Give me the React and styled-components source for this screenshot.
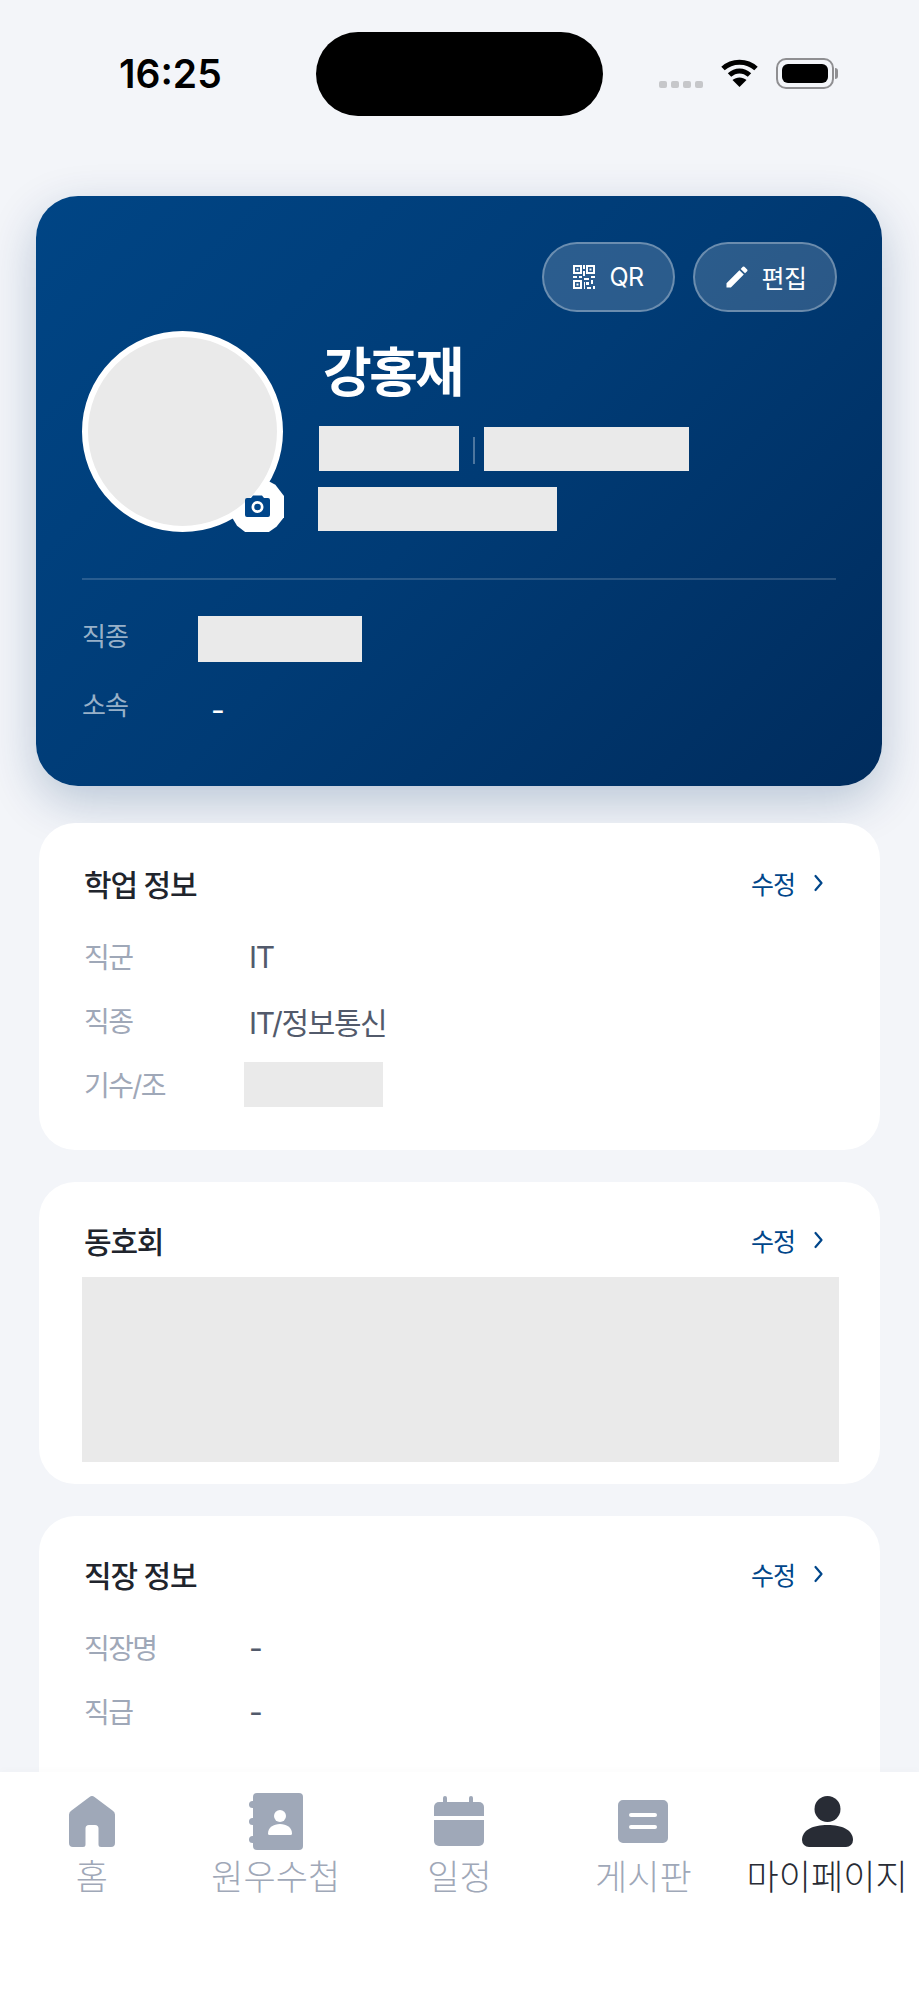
import React from 'react';
import styled, { createGlobalStyle } from 'styled-components';

const GlobalStyle = createGlobalStyle`
  html, body {
    margin: 0;
    padding: 0;
    background: #f3f5f9;
  }
  body {
    font-family: 'Inter', 'Noto Sans CJK KR', sans-serif;
    overflow: hidden;
  }
  * {
    box-sizing: border-box;
  }
`;

const Page = styled.div`
  position: relative;
  width: 919px;
  height: 1998px;
  overflow: hidden;
  background: #f3f5f9;
`;

const StatusBar = styled.div`
  height: 196px;
  display: flex;
  align-items: flex-start;
  padding: 32px 81px 0 119px;
`;

const Clock = styled.div`
  width: 197px;
  padding-top: 19px;
  font-size: 39px;
  line-height: 46px;
  font-weight: 600;
  letter-spacing: 0;
  color: #000;
`;

const Island = styled.div`
  width: 287px;
  height: 84px;
  border-radius: 42px;
  background: #000;
`;

const StatusIcons = styled.div`
  display: flex;
  align-items: flex-start;
  margin-left: 56px;
  padding-top: 27px;
`;

const SignalDots = styled.div`
  display: flex;
  gap: 4px;
  margin-top: 22px;
  margin-right: 17px;
`;

const SignalDot = styled.span`
  width: 8px;
  height: 7px;
  border-radius: 2px;
  background: #c6c7ca;
`;

const Battery = styled.div`
  position: relative;
  width: 58px;
  height: 31px;
  margin-left: 17px;
  margin-top: -1px;
  padding: 4px;
  border: 2px solid #8f8f92;
  border-radius: 10px;

  &::before {
    content: '';
    display: block;
    height: 100%;
    border-radius: 6px;
    background: #000;
  }
  &::after {
    content: '';
    position: absolute;
    top: 8px;
    right: -6px;
    width: 3px;
    height: 11px;
    border-radius: 0 3px 3px 0;
    background: #8f8f92;
  }
`;

const Hero = styled.section`
  margin: 0 37px 0 36px;
  height: 590px;
  padding: 46px 46px 0;
  border-radius: 42px;
  background: linear-gradient(135deg, #004585 0%, #003b75 50%, #002c5d 100%);
  box-shadow: 0 16px 48px rgba(0, 52, 104, 0.24);
`;

const HeroActions = styled.div`
  display: flex;
  justify-content: flex-end;
  gap: 18px;
  height: 70px;
  margin-right: -1px;
`;

const PillButton = styled.button`
  display: flex;
  align-items: center;
  justify-content: center;
  gap: ${(p) => p.$gap}px;
  width: ${(p) => p.$width}px;
  height: 70px;
  padding: 0;
  border: 2px solid rgba(255, 255, 255, 0.3);
  border-radius: 35px;
  background: rgba(255, 255, 255, 0.17);
  color: #fff;
  font-family: inherit;
  font-size: 25px;
  font-weight: 400;
  letter-spacing: -0.5px;
`;

const Profile = styled.div`
  display: flex;
  margin-top: 19px;
`;

const AvatarWrap = styled.div`
  position: relative;
  flex: none;
  width: 202px;
  height: 201px;
`;

const Avatar = styled.div`
  position: relative;
  z-index: 1;
  width: 201px;
  height: 201px;
  border: 6px solid #fff;
  border-radius: 50%;
  background: #eaeaea;
`;

const CameraBadge = styled.div`
  position: absolute;
  z-index: 2;
  top: 148px;
  left: 148px;
  width: 54px;
  height: 53px;
  display: flex;
  align-items: center;
  justify-content: center;
  padding-bottom: 1px;
  color: #00468a;
`;

const BadgeBack = styled.div`
  position: absolute;
  top: 148px;
  left: 148px;
  width: 54px;
  height: 53px;
  background: #fff;
  clip-path: polygon(36% 0, 64% 0, 84% 11%, 100% 32%, 100% 72%, 86% 90%, 72% 100%, 28% 100%, 13% 88%, 0 66%, 0 36%, 14% 12%);
`;

const ProfileInfo = styled.div`
  margin-left: 34px;
  padding-top: 7px;
`;

const Name = styled.h1`
  margin: 0 0 18px 5px;
  font-size: 53px;
  line-height: 70px;
  font-weight: 700;
  letter-spacing: -2.5px;
  color: #fff;
`;

const InfoLine = styled.div`
  display: flex;
  align-items: center;
`;

const Redacted = styled.div`
  flex: none;
  width: ${(p) => p.$w}px;
  height: ${(p) => p.$h}px;
  margin-left: ${(p) => p.$ml || 0}px;
  margin-top: ${(p) => p.$mt || 0}px;
  background: #eaeaea;
`;

const VDivider = styled.span`
  width: 2px;
  height: 27px;
  margin: 4px 9px 0 14px;
  background: rgba(255, 255, 255, 0.3);
`;

const InfoGap = styled.div`
  height: 16px;
`;

const HeroDivider = styled.div`
  height: 2px;
  margin-top: 46px;
  background: rgba(255, 255, 255, 0.16);
`;

const HeroRow = styled.div`
  display: flex;
  align-items: center;
  height: 46px;
  margin-top: ${(p) => p.$mt}px;
`;

const HeroLabel = styled.div`
  width: ${(p) => p.$w}px;
  padding-bottom: 9px;
  font-size: 26px;
  letter-spacing: -0.8px;
  color: rgba(255, 255, 255, 0.62);
`;

const HeroValue = styled.div`
  font-size: 30px;
  padding-top: 3px;
  color: #fff;
`;

const InfoCard = styled.section`
  height: ${(p) => p.$h}px;
  margin: ${(p) => p.$mt}px 39px 0 39px;
  padding: 0 44px 0 45px;
  border-radius: 36px;
  background: #fff;
  overflow: hidden;
`;

const CardHeader = styled.div`
  display: flex;
  align-items: center;
  justify-content: space-between;
  height: 40px;
  margin-top: ${(p) => p.$mt}px;
`;

const CardTitle = styled.h2`
  margin: 0;
  font-size: 30px;
  font-weight: 500;
  letter-spacing: -1.2px;
  color: #20242c;
`;

const EditLink = styled.a`
  display: flex;
  align-items: center;
  gap: 18px;
  margin-right: 12px;
  font-size: 25px;
  letter-spacing: -1px;
  color: #00468a;
`;

const CardRows = styled.div`
  margin-top: 30px;
`;

const CardRow = styled.div`
  display: flex;
  align-items: center;
  height: 45px;
  margin-bottom: 19px;
`;

const RowLabel = styled.div`
  width: 165px;
  font-size: 28px;
  letter-spacing: -1.6px;
  color: #9fa8b8;
`;

const RowValue = styled.div`
  padding-top: 3px;
  font-size: 30px;
  letter-spacing: -1.4px;
  color: #525a6b;
`;

const ClubBlock = styled.div`
  width: 757px;
  height: 185px;
  margin: 17px 0 0 -2px;
  background: #eaeaea;
`;

const TabBar = styled.nav`
  position: absolute;
  left: 0;
  right: 0;
  bottom: 0;
  height: 226px;
  display: grid;
  grid-template-columns: repeat(5, 1fr);
  background: #fff;
  box-shadow: 0 -4px 6px rgba(0, 0, 0, 0.012);
`;

const Tab = styled.div`
  display: flex;
  flex-direction: column;
  align-items: center;
  color: ${(p) => (p.$active ? '#282c35' : '#9fa8b8')};
`;

const TabIcon = styled.div`
  display: flex;
  align-items: center;
  justify-content: center;
  height: 60px;
  margin-top: 19px;
  margin-bottom: 4px;
`;

const TabLabel = styled.div`
  font-size: 35px;
  line-height: 44px;
  font-weight: 300;
  letter-spacing: 0;
  white-space: nowrap;
`;

const QrIcon = () => (
  <svg width="22" height="24" viewBox="0 0 22 24" fill="#fff">
    <path d="M0 0h9v9H0zM2 2v5h5V2zM13 0h9v9h-9zM15 2v5h5V2zM0 15h9v9H0zM2 17v5h5v-5z" fillRule="evenodd" />
    <path d="M3.500 3.500h2v2h-2zM16.500 3.500h2v2h-2zM3.500 18.500h2v2h-2zM10 0h2v4h-2zM10 6h2v5h-2zM0 11h4v2H0zM6 11h3v2H6zM11 13h5v2h-5zM18 11h4v2h-4zM13 17h3v3h-3zM18 15h2v4h-2zM11 17h1v7h-1zM14 22h4v2h-4zM20 21h2v3h-2z" />
  </svg>
);

const PencilIcon = () => (
  <svg width="28" height="28" viewBox="0 0 24 24" fill="#fff">
    <path d="M3 17.250V21h3.750L17.810 9.940l-3.750-3.750L3 17.250zM20.710 7.040a1 1 0 0 0 0-1.410l-2.340-2.340a1 1 0 0 0-1.410 0l-1.830 1.830 3.750 3.750 1.830-1.830z" />
  </svg>
);

const CameraIcon = () => (
  <svg width="25" height="23" viewBox="0 0 25 23" fill="currentColor">
    <path
      fillRule="evenodd"
      d="M8 1.500h9l2 2.500h4a2 2 0 0 1 2 2v15a2 2 0 0 1-2 2H2a2 2 0 0 1-2-2V6a2 2 0 0 1 2-2h4zM12.500 7a6 6 0 1 0 0 12 6 6 0 0 0 0-12zm0 2.700a3.300 3.300 0 1 1 0 6.600 3.300 3.300 0 0 1 0-6.600z"
    />
  </svg>
);

const Chevron = () => (
  <svg width="11" height="18" viewBox="0 0 11 18" fill="none" stroke="#00468a" strokeWidth="2.200" strokeLinecap="round" strokeLinejoin="round">
    <path d="M2.500 2l6 7-6 7" />
  </svg>
);

const WifiIcon = () => (
  <svg width="39" height="28" viewBox="0 0 38 28" fill="none" stroke="#000" strokeWidth="5">
    <path d="M2.500 9.500C11.500 1 26.500 1 35.500 9.500" />
    <path d="M9 16c6-5.500 14-5.500 20 0" />
    <path d="M19 28l-7-7c4-3.400 10-3.400 14 0z" fill="#000" stroke="none" />
  </svg>
);

const HomeIcon = () => (
  <svg width="46" height="51" viewBox="0 0 46 51" fill="currentColor">
    <path d="M20.500 1a4 4 0 0 1 5 0l18 13.500a5 5 0 0 1 2.500 4.500v28a4 4 0 0 1-4 4H32a2.500 2.500 0 0 1-2.500-2.500V32.500a3.500 3.500 0 0 0-3.500-3.500h-6a3.500 3.500 0 0 0-3.500 3.500v16a2.500 2.500 0 0 1-2.500 2.500H4a4 4 0 0 1-4-4V19a5 5 0 0 1 2.500-4.500z" />
  </svg>
);

const ContactsIcon = () => (
  <svg width="54" height="57" viewBox="0 0 54 57" fill="currentColor">
    <rect x="4" y="0" width="50" height="57" rx="4" />
    <rect x="0" y="8" width="8" height="7" rx="3.500" />
    <rect x="0" y="25" width="8" height="7" rx="3.500" />
    <rect x="0" y="43" width="8" height="7" rx="3.500" />
    <circle cx="31" cy="23" r="6" fill="#fff" />
    <path d="M19 40.500c0-6 5.500-9.500 12-9.500s12 3.500 12 9.500a1.500 1.500 0 0 1-1.500 1.500h-21a1.500 1.500 0 0 1-1.500-1.500z" fill="#fff" />
  </svg>
);

const CalendarIcon = () => (
  <svg width="50" height="50" viewBox="0 0 50 50" fill="currentColor">
    <rect x="9" y="0" width="4" height="10" rx="2" />
    <rect x="35" y="0" width="4" height="10" rx="2" />
    <path d="M5 6h40a5 5 0 0 1 5 5v9H0v-9a5 5 0 0 1 5-5z" />
    <path d="M0 24h50v21a5 5 0 0 1-5 5H5a5 5 0 0 1-5-5z" />
  </svg>
);

const BoardIcon = () => (
  <svg width="50" height="43" viewBox="0 0 50 43" fill="currentColor">
    <path
      fillRule="evenodd"
      d="M5 0h40a5 5 0 0 1 5 5v33a5 5 0 0 1-5 5H5a5 5 0 0 1-5-5V5a5 5 0 0 1 5-5zm8 13a2 2 0 0 0 0 4h24a2 2 0 0 0 0-4zm0 12a2 2 0 0 0 0 4h24a2 2 0 0 0 0-4z"
    />
  </svg>
);

const PersonIcon = () => (
  <svg width="51" height="51" viewBox="0 0 51 51" fill="currentColor">
    <circle cx="25.500" cy="13" r="13" />
    <path d="M0 44c0-10 11-15 25.500-15S51 34 51 44a7 7 0 0 1-7 7H7a7 7 0 0 1-7-7z" />
  </svg>
);

const tabs = [
  { label: '홈', Icon: HomeIcon },
  { label: '원우수첩', Icon: ContactsIcon },
  { label: '일정', Icon: CalendarIcon },
  { label: '게시판', Icon: BoardIcon },
  { label: '마이페이지', Icon: PersonIcon, active: true }
];

const Header = ({ title, top }) => (
  <CardHeader $mt={top}>
    <CardTitle>{title}</CardTitle>
    <EditLink>
      수정
      <Chevron />
    </EditLink>
  </CardHeader>
);

const App = () => {
  return (
    <Page>
      <GlobalStyle />
      <StatusBar>
        <Clock>16:25</Clock>
        <Island />
        <StatusIcons>
          <SignalDots>
            <SignalDot />
            <SignalDot />
            <SignalDot />
            <SignalDot />
          </SignalDots>
          <WifiIcon />
          <Battery />
        </StatusIcons>
      </StatusBar>

      <Hero>
        <HeroActions>
          <PillButton $width={133} $gap={14}>
            <QrIcon />
            QR
          </PillButton>
          <PillButton $width={144} $gap={10}>
            <PencilIcon />
            편집
          </PillButton>
        </HeroActions>
        <Profile>
          <AvatarWrap>
            <BadgeBack />
            <Avatar />
            <CameraBadge>
              <CameraIcon />
            </CameraBadge>
          </AvatarWrap>
          <ProfileInfo>
            <Name>강홍재</Name>
            <InfoLine>
              <Redacted $w={140} $h={45} $ml={1} />
              <VDivider />
              <Redacted $w={205} $h={44} />
            </InfoLine>
            <InfoGap />
            <Redacted $w={239} $h={44} />
          </ProfileInfo>
        </Profile>
        <HeroDivider />
        <HeroRow $mt={36}>
          <HeroLabel $w={116}>직종</HeroLabel>
          <Redacted $w={164} $h={46} />
        </HeroRow>
        <HeroRow $mt={23}>
          <HeroLabel $w={129}>소속</HeroLabel>
          <HeroValue>-</HeroValue>
        </HeroRow>
      </Hero>

      <InfoCard $mt={37} $h={327}>
        <Header title="학업 정보" top={40} />
        <CardRows>
          <CardRow>
            <RowLabel>직군</RowLabel>
            <RowValue>IT</RowValue>
          </CardRow>
          <CardRow>
            <RowLabel>직종</RowLabel>
            <RowValue>IT/정보통신</RowValue>
          </CardRow>
          <CardRow>
            <RowLabel>기수/조</RowLabel>
            <Redacted $w={139} $h={45} $ml={-5} $mt={2} />
          </CardRow>
        </CardRows>
      </InfoCard>

      <InfoCard $mt={32} $h={302}>
        <Header title="동호회" top={38} />
        <ClubBlock />
      </InfoCard>

      <InfoCard $mt={32} $h={400}>
        <Header title="직장 정보" top={38} />
        <CardRows>
          <CardRow>
            <RowLabel>직장명</RowLabel>
            <RowValue>-</RowValue>
          </CardRow>
          <CardRow>
            <RowLabel>직급</RowLabel>
            <RowValue>-</RowValue>
          </CardRow>
        </CardRows>
      </InfoCard>

      <TabBar>
        {tabs.map(({ label, Icon, active }) => (
          <Tab key={label} $active={active}>
            <TabIcon>
              <Icon />
            </TabIcon>
            <TabLabel>{label}</TabLabel>
          </Tab>
        ))}
      </TabBar>
    </Page>
  );
};

export default App;
